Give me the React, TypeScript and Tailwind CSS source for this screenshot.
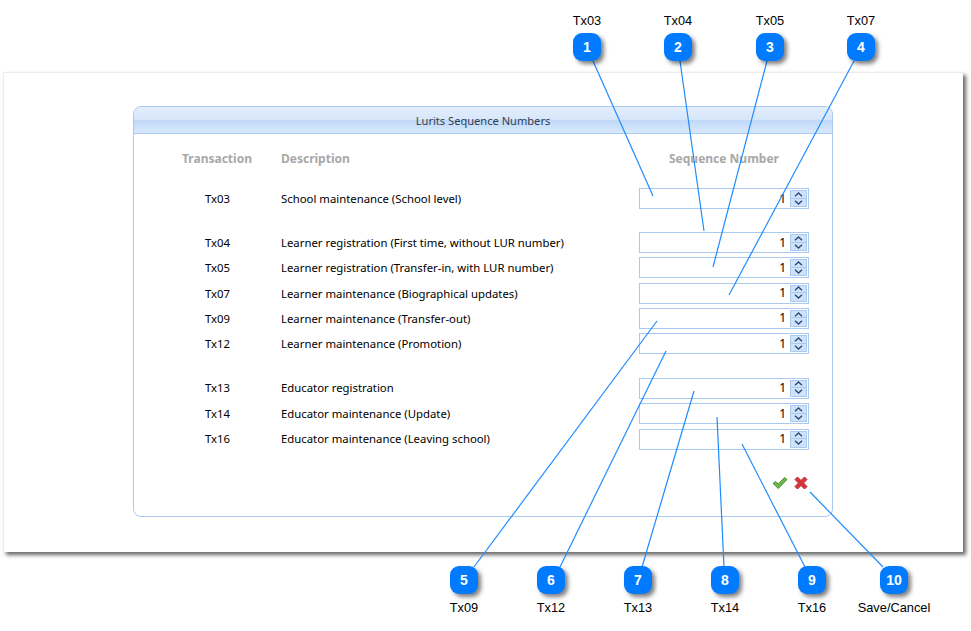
const rowFont = "font-['Noto_Sans','DejaVu_Sans',sans-serif]";

type Row = { code: string; text: string };

const groups: { rows: Row[]; step: string }[] = [
  { step: 'h-[25px]', rows: [{ code: 'Tx03', text: 'School maintenance (School level)' }] },
  {
    step: 'h-[25.25px]',
    rows: [
      { code: 'Tx04', text: 'Learner registration (First time, without LUR number)' },
      { code: 'Tx05', text: 'Learner registration (Transfer-in, with LUR number)' },
      { code: 'Tx07', text: 'Learner maintenance (Biographical updates)' },
      { code: 'Tx09', text: 'Learner maintenance (Transfer-out)' },
      { code: 'Tx12', text: 'Learner maintenance (Promotion)' },
    ],
  },
  {
    step: 'h-[25.5px]',
    rows: [
      { code: 'Tx13', text: 'Educator registration' },
      { code: 'Tx14', text: 'Educator maintenance (Update)' },
      { code: 'Tx16', text: 'Educator maintenance (Leaving school)' },
    ],
  },
];

const callouts = [
  { n: 1, label: 'Tx03', x: 587, y: 47, to: [653, 196], from: [593, 61] },
  { n: 2, label: 'Tx04', x: 678, y: 47, to: [704, 231], from: [680, 61] },
  { n: 3, label: 'Tx05', x: 770, y: 47, to: [713, 267], from: [767, 61] },
  { n: 4, label: 'Tx07', x: 861, y: 47, to: [729, 295], from: [854, 61] },
  { n: 5, label: 'Tx09', x: 464, y: 580, to: [657, 321], from: [474, 567] },
  { n: 6, label: 'Tx12', x: 551, y: 580, to: [666, 351], from: [560, 567] },
  { n: 7, label: 'Tx13', x: 638, y: 580, to: [694, 391], from: [642, 567] },
  { n: 8, label: 'Tx14', x: 725, y: 580, to: [717, 417], from: [724, 567] },
  { n: 9, label: 'Tx16', x: 812, y: 580, to: [742, 444], from: [805, 567] },
  { n: 10, label: 'Save/Cancel', x: 894, y: 580, to: [810, 492], from: [883, 567] },
];

function Spinner() {
  return (
    <div className="flex h-[21px] w-[170px] items-center justify-end border border-[#a9c9f0] bg-white pr-[1px]">
      <span className={`mr-[4px] text-[12px] text-black ${rowFont}`}>1</span>
      <div className="flex h-[17px] w-[17px] flex-col border border-[#a9c9f0] bg-[#cfe2fa]">
        <button className="flex h-1/2 items-center justify-center border-b border-[#a9c9f0]">
          <svg width="9" height="5" viewBox="0 0 9 5" fill="none" stroke="#2c4a75" strokeWidth="1.4">
            <path d="M1 4.3 4.5 1 8 4.3" />
          </svg>
        </button>
        <button className="flex h-1/2 items-center justify-center">
          <svg width="9" height="5" viewBox="0 0 9 5" fill="none" stroke="#2c4a75" strokeWidth="1.4">
            <path d="M1 .7 4.5 4 8 .7" />
          </svg>
        </button>
      </div>
    </div>
  );
}

export default function App() {
  return (
    <div className="relative h-[631px] w-[971px] overflow-hidden bg-white">
      <div className="ml-[3px] h-[72px]" />
      <div className="ml-[3px] h-[480px] w-[960px] border-t border-l border-[#ececec] bg-white pt-[33px] pl-[129px] shadow-[3px_3px_4px_rgba(0,0,0,0.6)]">
        <div className="h-[411px] w-[700px] rounded-[8px] border border-[#a9c9f0]">
          <div className={`flex h-[27px] items-center justify-center rounded-t-[7px] border-b border-[#a9c9f0] bg-[linear-gradient(#e4eefd_0%,#d7e6fb_48%,#c0d8f8_50%,#d8e8fc_100%)] pt-[2px] text-[11.1px] text-[#2f3d52] ${rowFont}`}>
            Lurits Sequence Numbers
          </div>
          <div className={`flex h-[48px] items-center pt-[1px] text-[12px] font-bold text-[#a8a8a8] ${rowFont}`}>
            <div className="w-[147px] pl-[19px] text-center">Transaction</div>
            <div className="w-[358px]">Description</div>
            <div className="w-[170px] text-center">Sequence Number</div>
          </div>
          <div className={`flex flex-col gap-[19px] pt-[4px] text-[11.35px] text-black ${rowFont}`}>
            {groups.map((g, i) => (
              <div key={i} className="flex flex-col">
                {g.rows.map((r) => (
                  <div key={r.code} className={`flex items-center ${g.step}`}>
                    <div className="w-[147px] pl-[20px] text-center">{r.code}</div>
                    <div className="w-[358px]">{r.text}</div>
                    <Spinner />
                  </div>
                ))}
              </div>
            ))}
          </div>
          <div className="mt-[24px] flex justify-end gap-[6px] pr-[24px]">
            <svg width="16" height="14" viewBox="0 0 16 14">
              <path d="M1 7.5 3.5 5.5 6.2 8 12.5 1.5 15 3.5 6.3 12.5Z" fill="#6cb84a" stroke="#4c8f33" strokeWidth="1" strokeLinejoin="round" />
            </svg>
            <svg width="14" height="14" viewBox="0 0 14 14">
              <path d="M1 3.5 3.5 1 7 4.5 10.5 1 13 3.5 9.5 7 13 10.5 10.5 13 7 9.5 3.5 13 1 10.5 4.5 7Z" fill="#d8353a" stroke="#b02a2e" strokeWidth="1" strokeLinejoin="round" />
            </svg>
          </div>
        </div>
      </div>

      <svg className="absolute top-0 left-0" width="971" height="631" fill="none" stroke="#1e8cff" strokeWidth="1.2">
        {callouts.map((c) => (
          <line key={c.n} x1={c.from[0]} y1={c.from[1]} x2={c.to[0]} y2={c.to[1]} />
        ))}
      </svg>

      {callouts.map((c) => (
        <div key={c.n}>
          <div
            className="absolute flex h-[28px] w-[28px] -translate-x-1/2 -translate-y-1/2 items-center justify-center rounded-[9px] bg-[#007bff] font-['Liberation_Sans',sans-serif] text-[14px] font-bold text-white shadow-[3px_3px_4px_rgba(0,0,0,0.5)]"
            style={{ left: c.x, top: c.y }}
          >
            {c.n}
          </div>
          <div
            className="absolute -translate-x-1/2 font-['Liberation_Sans',sans-serif] text-[12.8px] leading-[15px] whitespace-nowrap text-black"
            style={{ left: c.x, top: c.y < 100 ? 13 : 600 }}
          >
            {c.label}
          </div>
        </div>
      ))}
    </div>
  );
}
